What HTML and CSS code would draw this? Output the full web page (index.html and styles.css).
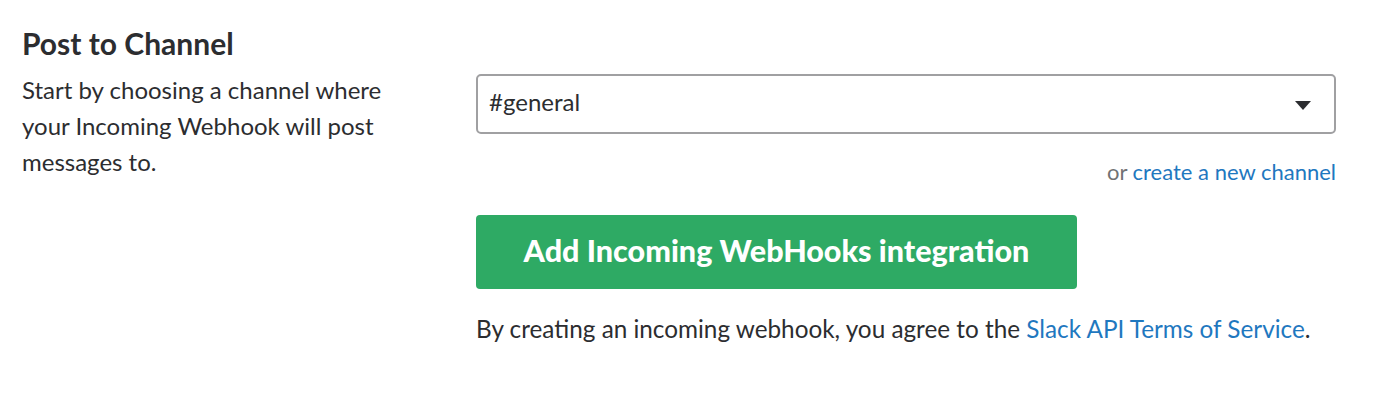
FILE: index.html
```html
<!DOCTYPE html>
<html>
<head>
<meta charset="utf-8">
<link rel="stylesheet" href="styles.css">
</head>
<body>
<section class="setting">
  <div class="desc">
    <h2 class="title">Post to Channel</h2>
    <p class="help">Start by choosing a channel where your Incoming Webhook will post messages to.</p>
  </div>
  <div class="control">
    <div class="select">
      <span class="select-value">#general</span>
      <svg class="caret" width="16" height="9" viewBox="0 0 16 9"><path d="M0 0 H16 L8 9 Z" fill="#2c2d30"/></svg>
    </div>
    <p class="alt">or <a class="link" href="#">create a new channel</a></p>
    <button class="btn">Add Incoming WebHooks integration</button>
    <p class="terms">By creating an incoming webhook, you agree to the <a class="link" href="#">Slack API Terms of Service</a>.</p>
  </div>
</section>
</body>
</html>
```

FILE: styles.css
```css
* { box-sizing: border-box; }
html, body { margin: 0; padding: 0; background: #fff; }
body {
  font-family: Lato, "Open Sans", sans-serif;
  color: #2c2d30;
  font-size: 24px;
}
.setting {
  display: grid;
  grid-template-columns: 454px 860px;
  padding: 24px 0 0 22px;
}
.title {
  margin: 0;
  font-size: 30px;
  font-weight: 700;
  line-height: 38px;
}
.help {
  margin: 10px 0 0;
  font-size: 24px;
  line-height: 36px;
  width: 380px;
}
.control { padding-top: 50px; }
.select {
  height: 60px;
  border: 2px solid #a0a0a2;
  border-radius: 5px;
  display: flex;
  align-items: center;
  justify-content: space-between;
  padding: 0 23px 0 11px;
}
.select-value { font-size: 24px; line-height: 30px; margin-top: -4px; }
.caret { display: block; margin-top: 2px; }
.alt {
  margin: 14px 0 0;
  text-align: right;
  color: #717274;
  font-size: 22px;
  line-height: 48px;
}
.link { color: #1f78bf; text-decoration: none; }
.btn {
  display: block;
  margin-top: 19px;
  width: 601px;
  height: 74px;
  border: none;
  border-radius: 4px;
  background: #2eaa64;
  color: #fff;
  font-family: Lato, sans-serif;
  font-weight: 900;
  font-size: 30.5px;
  padding: 0 0 4px;
}
.terms {
  margin: 24px 0 0;
  font-size: 24.3px;
  line-height: 32px;
}
```
